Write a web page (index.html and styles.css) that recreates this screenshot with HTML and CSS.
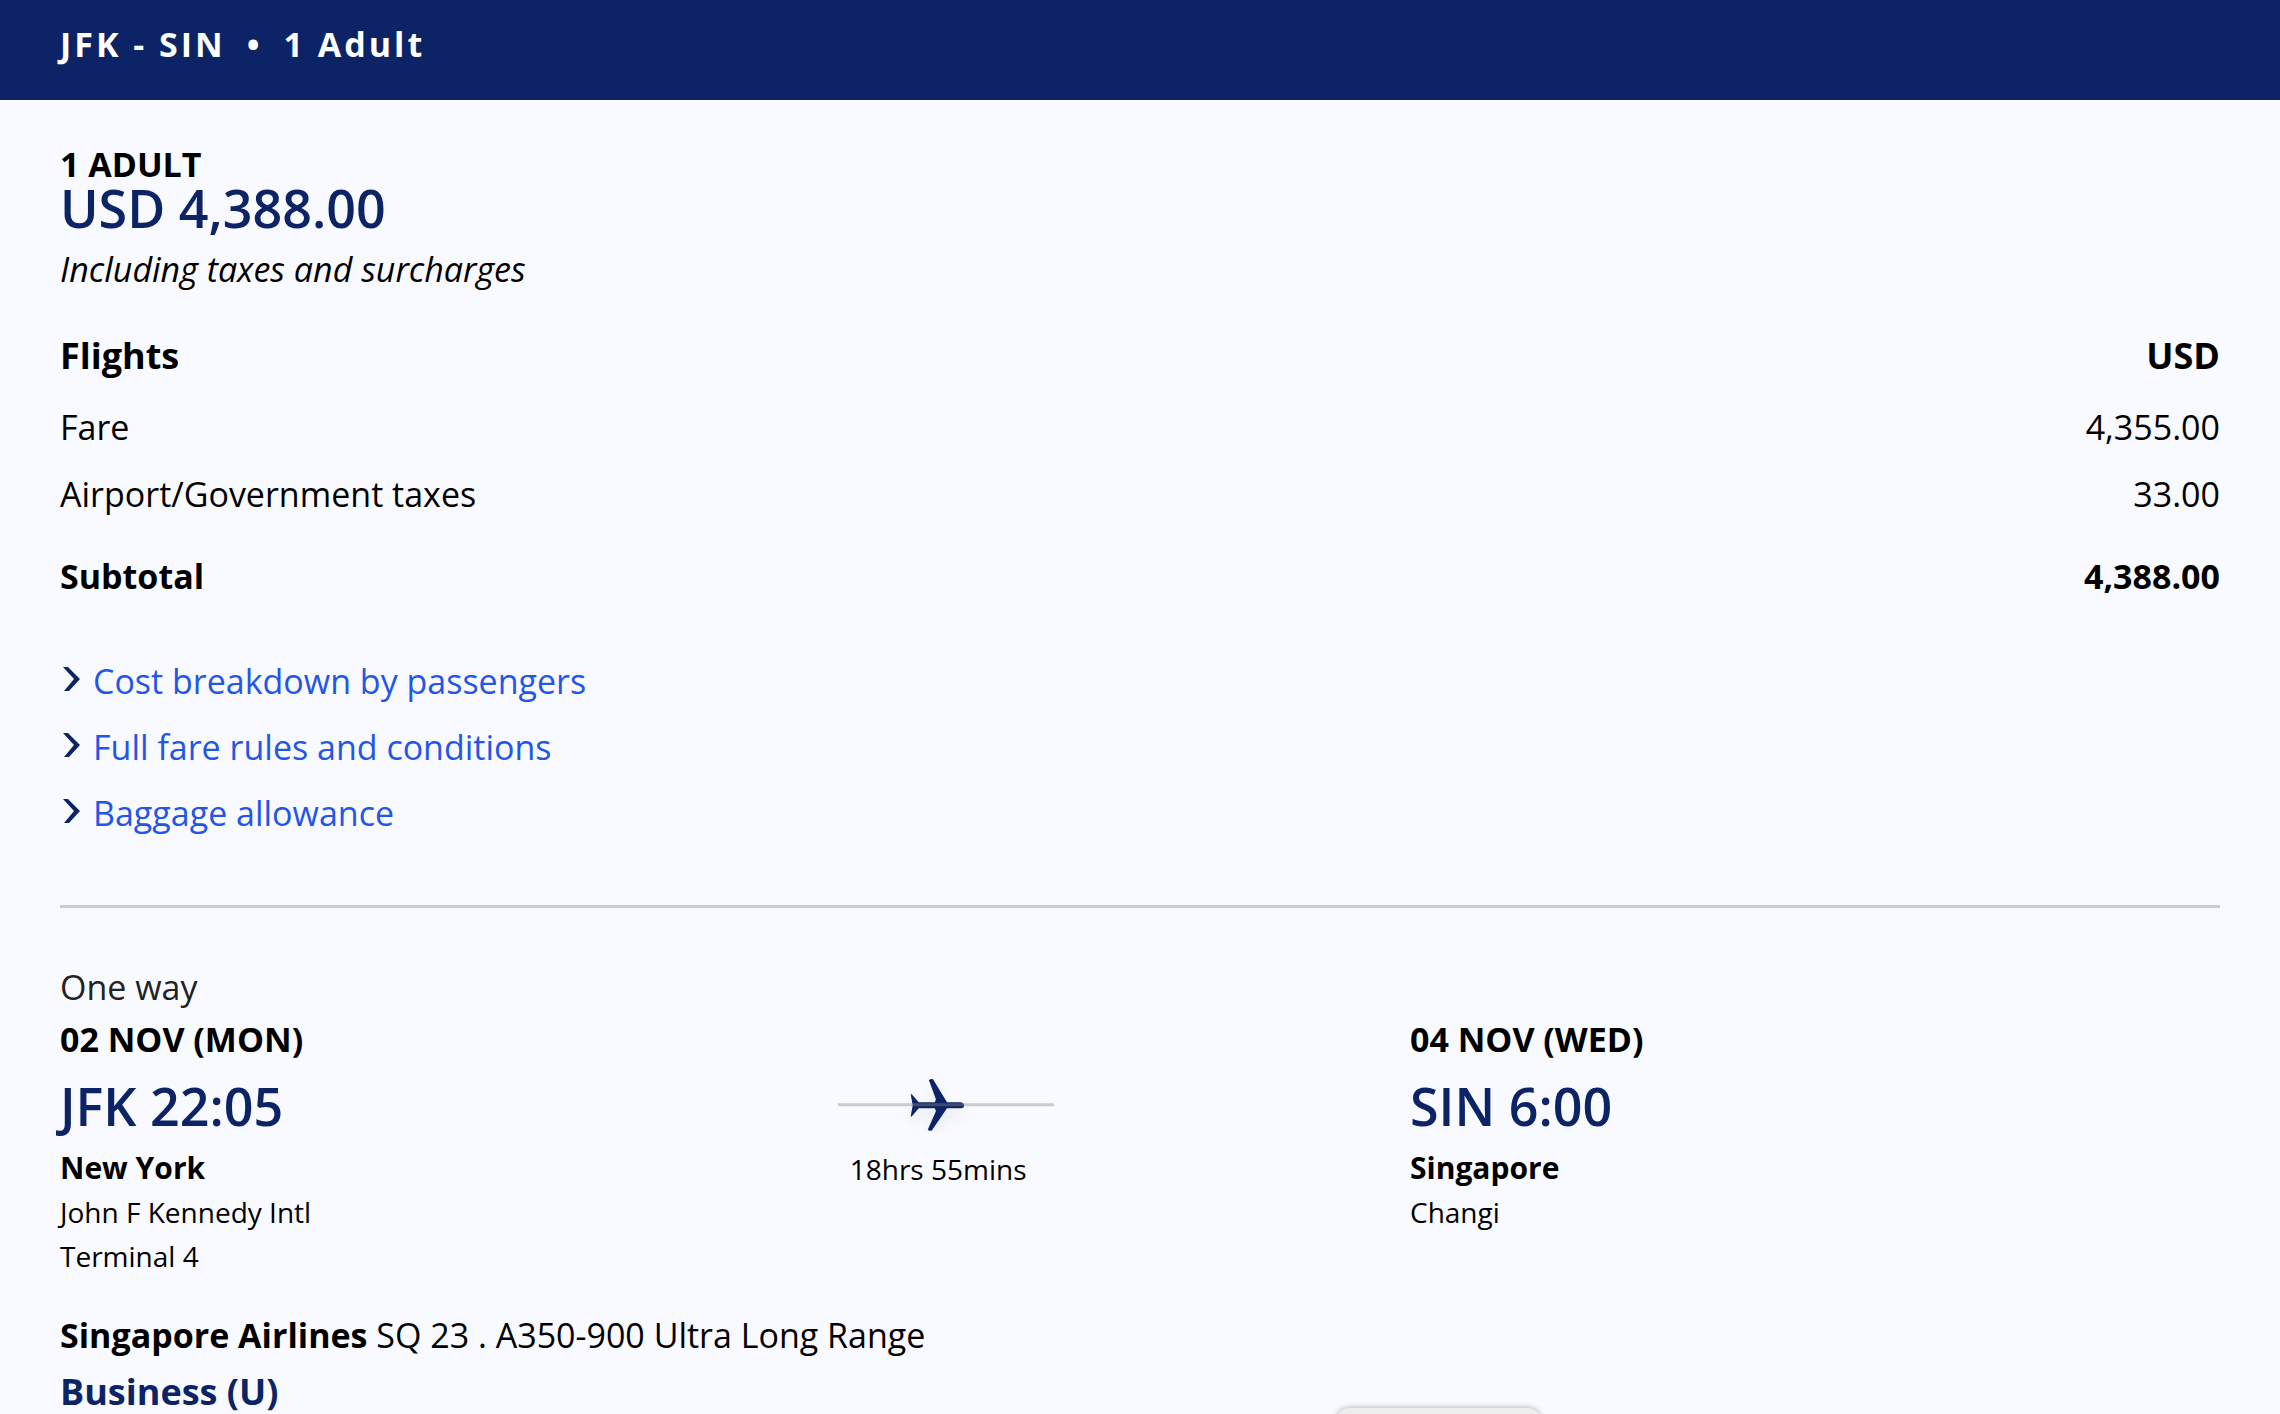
FILE: index.html
```html
<!DOCTYPE html>
<html lang="en">
    <head>
        <meta charset="utf-8">
        <title>JFK - SIN</title>
        <meta name="viewport" content="width=device-width, initial-scale=1">
        <link rel="stylesheet" href="styles.css">
    </head>
    <body>
        <header class="trip-bar">
            <span>JFK - SIN</span>
            <span>•</span>
            <span>1 Adult</span>
        </header>

        <main>
            <section class="summary">
                <h2 class="label">1 ADULT</h2>
                <p class="total">USD 4,388.00</p>
                <p class="note">Including taxes and surcharges</p>

                <table class="costs">
                    <thead>
                        <tr><th scope="col">Flights</th><th scope="col">USD</th></tr>
                    </thead>
                    <tbody>
                        <tr><td>Fare</td><td>4,355.00</td></tr>
                        <tr><td>Airport/Government taxes</td><td>33.00</td></tr>
                    </tbody>
                    <tfoot>
                        <tr><th scope="row">Subtotal</th><td>4,388.00</td></tr>
                    </tfoot>
                </table>

                <ul class="links">
                    <li>
                        <svg viewBox="0 0 20 24" aria-hidden="true"><path d="M3 0h5l12 12L9 24H4l10-12z"/></svg>
                        <a href="#breakdown">Cost breakdown by passengers</a>
                    </li>
                    <li>
                        <svg viewBox="0 0 20 24" aria-hidden="true"><path d="M3 0h5l12 12L9 24H4l10-12z"/></svg>
                        <a href="#rules">Full fare rules and conditions</a>
                    </li>
                    <li>
                        <svg viewBox="0 0 20 24" aria-hidden="true"><path d="M3 0h5l12 12L9 24H4l10-12z"/></svg>
                        <a href="#baggage">Baggage allowance</a>
                    </li>
                </ul>
            </section>

            <section class="flight">
                <p class="direction">One way</p>

                <div class="legs">
                    <div class="stop">
                        <h3 class="date">02 NOV (MON)</h3>
                        <p class="time">JFK 22:05</p>
                        <p class="city">New York</p>
                        <p class="airport">John F Kennedy Intl<br>Terminal 4</p>
                    </div>

                    <div class="duration">
                        <svg viewBox="0 0 214 60" aria-hidden="true">
                            <path class="plane" d="M80 31H96L97 28L90 9Q91 8 94 8L108 31H122Q125 32 125 34Q125 37 122 37H108L93 59Q90 60 89 58L97 40L96 37H80L73 45L72 45L74 34L72 23L73 23Z"/>
                            <path class="track" d="M0 33.5H214"/>
                        </svg>
                        <p>18hrs 55mins</p>
                    </div>

                    <div class="stop arrival">
                        <h3 class="date">04 NOV (WED)</h3>
                        <p class="time">SIN 6:00</p>
                        <p class="city">Singapore</p>
                        <p class="airport">Changi</p>
                    </div>
                </div>

                <p class="carrier"><b>Singapore Airlines</b> SQ 23 . A350-900 Ultra Long Range</p>
                <p class="cabin">Business (U)</p>
            </section>
        </main>

        <div class="drawer"></div>
    </body>
</html>
```

FILE: styles.css
```css
* {
    box-sizing: border-box;
}

body {
    margin: 0;
    height: 100vh;
    overflow: hidden;
    background-color: #f9faff;
    color: #000;
    font-family: "Open Sans", sans-serif;
    font-size: 34px;
    line-height: 44px;
}

h2, h3, p, ul {
    margin: 0;
    padding: 0;
    font-size: inherit;
}

.trip-bar {
    display: flex;
    gap: 21px;
    padding: 22px 60px 34px;
    background-color: #0c2466;
    color: #fff;
    font-weight: bold;
    letter-spacing: 3px;
}

main {
    padding: 0 60px;
}

.summary {
    padding: 42px 0 70px;
    border-bottom: 3px solid #ccc;
}

.total,
.time {
    color: #0c2466;
    font-size: 52px;
    font-weight: 600;
}

.note {
    margin-top: 17px;
    font-style: italic;
}

.costs {
    width: 100%;
    margin-top: 43px;
    border-collapse: collapse;
}

.costs th,
.costs td {
    padding: 0 0 23px;
    text-align: left;
}

.costs thead th {
    padding-bottom: 27px;
    font-size: 36px;
}

.costs tfoot th,
.costs tfoot td {
    padding: 15px 0 0;
    font-weight: bold;
}

.costs tr > :last-child {
    text-align: right;
}

.links {
    display: grid;
    gap: 22px;
    margin-top: 61px;
    list-style: none;
}

.links li {
    display: flex;
    align-items: center;
    gap: 13px;
}

.links svg {
    width: 20px;
    height: 24px;
    margin-bottom: 4px;
    fill: #0c2466;
}

.links a {
    color: #2356e6;
    text-decoration: none;
}

.flight {
    padding-top: 57px;
}

.direction {
    color: #222;
}

.legs {
    display: grid;
    grid-template-columns: 36% 10% 1fr 37.5%;
    margin-top: 8px;
}

.time {
    margin: 23px 0 18px;
}

.city {
    font-size: 30px;
    font-weight: bold;
}

.airport,
.duration p {
    font-size: 28px;
}

.duration {
    padding-top: 54px;
    text-align: center;
}

.duration svg {
    display: block;
    width: 100%;
}

.duration p {
    margin-top: 15px;
    padding-right: 15px;
}

.plane {
    fill: #0c2466;
    filter: drop-shadow(0 8px 6px #0001);
}

.track {
    stroke: #8886;
    stroke-width: 3;
}

.arrival {
    grid-column: 4;
}

.carrier {
    margin-top: 35px;
}

.cabin {
    margin-top: 13px;
    color: #0c2466;
    font-size: 36px;
    font-weight: bold;
}

/* top edge of the closed drawer */
.drawer {
    position: fixed;
    bottom: -54px;
    left: 1337px;
    width: 203px;
    height: 60px;
    border-radius: 12px;
    background-color: #eee;
    box-shadow: 0 0 6px #0005;
}
```
